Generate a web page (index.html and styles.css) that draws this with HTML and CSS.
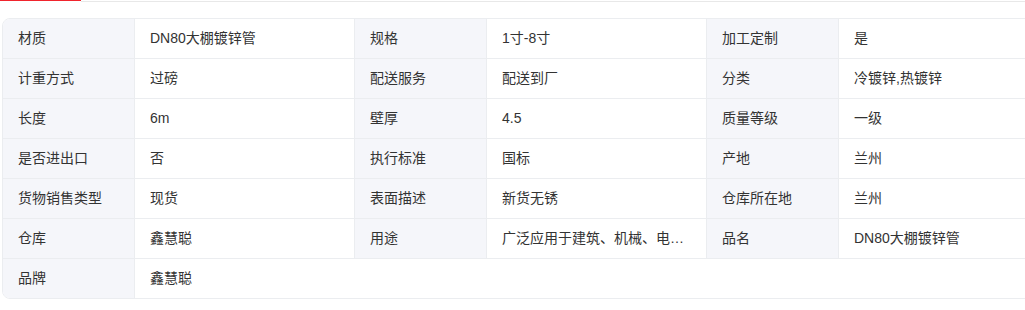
FILE: index.html
```html
<!DOCTYPE html>
<html lang="zh">
<head>
<meta charset="utf-8">
<title>商品参数</title>
<link rel="stylesheet" href="styles.css">
</head>
<body>
<div class="tabbar">
  <div class="tab-active"></div>
  <div class="tab-rest"></div>
</div>
<div class="params">
  <div class="row">
    <div class="cell label">材质</div><div class="cell value">DN80大棚镀锌管</div>
    <div class="cell label">规格</div><div class="cell value">1寸-8寸</div>
    <div class="cell label">加工定制</div><div class="cell value">是</div>
  </div>
  <div class="row">
    <div class="cell label">计重方式</div><div class="cell value">过磅</div>
    <div class="cell label">配送服务</div><div class="cell value">配送到厂</div>
    <div class="cell label">分类</div><div class="cell value">冷镀锌,热镀锌</div>
  </div>
  <div class="row">
    <div class="cell label">长度</div><div class="cell value">6m</div>
    <div class="cell label">壁厚</div><div class="cell value">4.5</div>
    <div class="cell label">质量等级</div><div class="cell value">一级</div>
  </div>
  <div class="row">
    <div class="cell label">是否进出口</div><div class="cell value">否</div>
    <div class="cell label">执行标准</div><div class="cell value">国标</div>
    <div class="cell label">产地</div><div class="cell value">兰州</div>
  </div>
  <div class="row">
    <div class="cell label">货物销售类型</div><div class="cell value">现货</div>
    <div class="cell label">表面描述</div><div class="cell value">新货无锈</div>
    <div class="cell label">仓库所在地</div><div class="cell value">兰州</div>
  </div>
  <div class="row">
    <div class="cell label">仓库</div><div class="cell value">鑫慧聪</div>
    <div class="cell label">用途</div><div class="cell value" title="广泛应用于建筑、机械、电力、石油化工等行业">广泛应用于建筑、机械、电…</div>
    <div class="cell label">品名</div><div class="cell value">DN80大棚镀锌管</div>
  </div>
  <div class="row">
    <div class="cell label">品牌</div><div class="cell value wide">鑫慧聪</div>
  </div>
</div>
</body>
</html>
```

FILE: styles.css
```css
html, body {
  margin: 0;
  padding: 0;
  overflow: hidden;
  background: #ffffff;
}
body {
  font-family: "Liberation Sans", "Noto Sans CJK SC", sans-serif;
  font-size: 14px;
  color: #333333;
}
.tabbar {
  display: flex;
  height: 2px;
}
.tab-active {
  width: 81px;
  border-top: 1px solid #f0242d;
}
.tab-rest {
  flex: 1;
  border-bottom: 1px solid #e8e8e8;
}
.params {
  margin: 16px 0 0 2px;
  width: 1056px;
  border: 1px solid #ebedf0;
  border-radius: 8px;
  overflow: hidden;
}
.row {
  display: grid;
  grid-template-columns: 132px 220px 132px 220px 132px 220px;
  height: 40px;
  border-bottom: 1px solid #ebedf0;
  box-sizing: border-box;
}
.row:last-child {
  border-bottom: none;
  height: 39px;
}
.cell {
  border-right: 1px solid #ebedf0;
  padding: 0 12px 0 15px;
  min-width: 0;
  height: 39px;
  line-height: 38px;
  white-space: nowrap;
  overflow: hidden;
}
.cell.label {
  background: #f5f6fa;
}
.cell.wide {
  grid-column: 2 / -1;
  border-right: none;
}
```
